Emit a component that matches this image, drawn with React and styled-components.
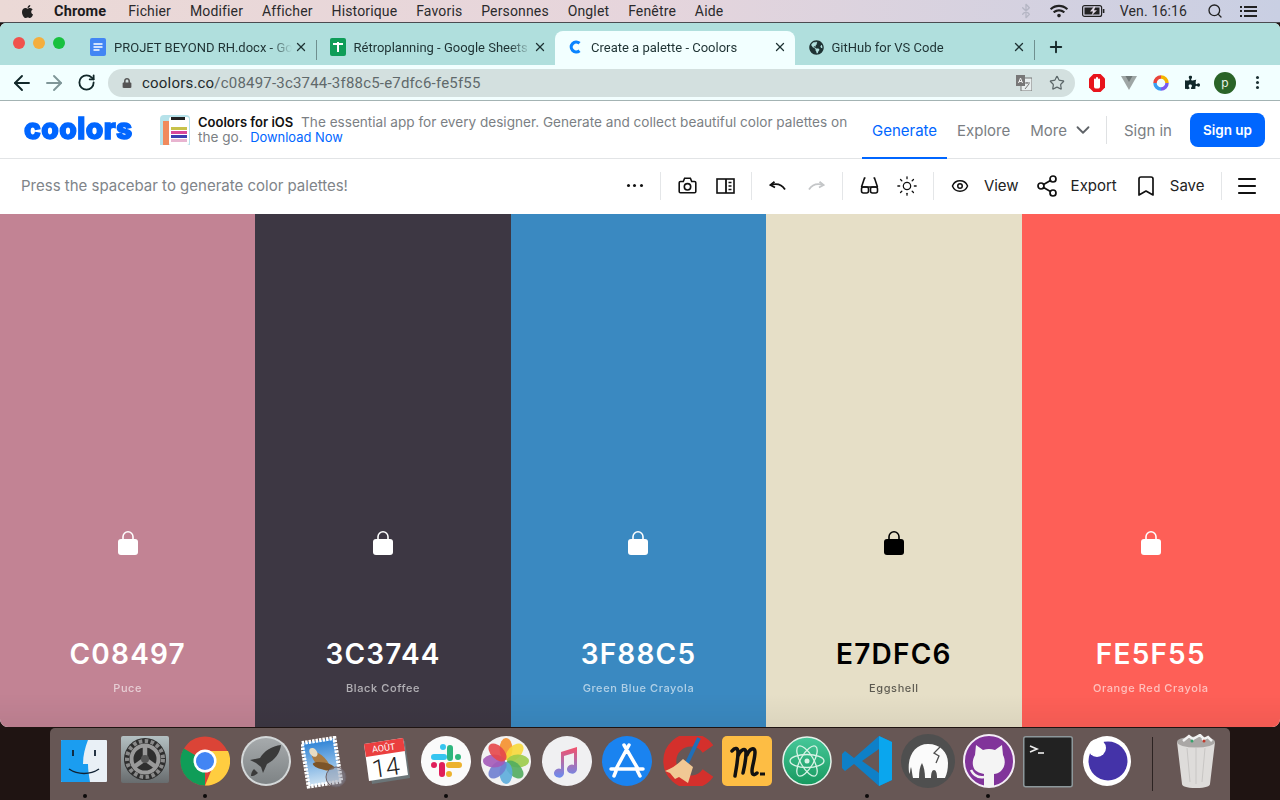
import React from 'react';
import styled, { createGlobalStyle } from 'styled-components';
import {
  ArrowLeft, ArrowRight, RotateCw, Star, X, Plus, Sun, Eye, Share2,
  Bookmark, Menu, ChevronDown, Bluetooth, Search,
} from 'lucide-react';
import { FaApple, FaLock, FaPuzzlePiece, FaGlobeAmericas, FaWifi } from 'react-icons/fa';

const Global = createGlobalStyle`
  html, body { margin: 0; padding: 0; overflow: hidden; }
  body { background: #1f1412; font-family: Inter, "Liberation Sans", sans-serif; }
  * { box-sizing: border-box; }
`;

const Screen = styled.div`
  width: 1280px;
  height: 800px;
  display: flex;
  flex-direction: column;
  background: #1f1412;
`;

const MenuBar = styled.div`
  height: 23px;
  flex: none;
  display: flex;
  align-items: center;
  padding: 0 0 0 20px;
  font-family: Roboto, sans-serif;
  font-size: 14px;
  letter-spacing: 0.15px;
  color: #2b2a2c;
  background: linear-gradient(90deg, #ebd9d6, #e6d5dc 50%, #c9cfe3);
  border-bottom: 1px solid #4a4b50;
`;

const AppleMark = styled(FaApple)`
  margin-right: 19px;
  color: #222;
`;

const MenuLabel = styled.span`
  margin-right: ${p => p.$gap ?? 19}px;
  margin-left: ${p => p.$ml ?? 0}px;
  font-weight: ${p => (p.$bold ? 700 : 400)};
  font-size: ${p => (p.$bold ? 14.5 : 14)}px;
  color: ${p => (p.$bold ? '#1c1b1d' : '#2b2a2c')};
`;

const StatusArea = styled.div`
  margin-left: auto;
  display: flex;
  align-items: center;
  padding-right: 23px;
  svg { flex: none; }
`;

const StatusSlot = styled.span`
  display: flex;
  margin-right: ${p => p.$mr}px;
  color: ${p => p.$c || '#222'};
`;

const ListGlyph = styled.span`
  width: 17px;
  height: 11px;
  display: flex;
  flex-direction: column;
  justify-content: space-between;
  i {
    height: 2px;
    background: linear-gradient(90deg, #222 2px, transparent 2px, transparent 4px, #222 4px);
  }
`;

const Browser = styled.div`
  flex: none;
  height: 704px;
  display: flex;
  flex-direction: column;
  background: #fff;
  border-radius: 6px 6px 8px 8px;
  overflow: hidden;
`;

const TabStrip = styled.div`
  height: 42px;
  flex: none;
  display: flex;
  align-items: flex-end;
  padding-left: 76px;
  background: #b0dfdd;
  position: relative;
`;

const Lights = styled.div`
  position: absolute;
  left: 13px;
  top: 14px;
  display: flex;
  gap: 8px;
`;

const Light = styled.i`
  width: 12px;
  height: 12px;
  border-radius: 50%;
  background: ${p => p.$c};
`;

const Tab = styled.div`
  width: 239.5px;
  height: 34px;
  display: flex;
  align-items: center;
  padding: 0 8px 2px 14px;
  font-family: Roboto, sans-serif;
  font-size: 13px;
  color: #1e3233;
  border-radius: 8px 8px 0 0;
  background: ${p => (p.$active ? '#f2ffff' : 'transparent')};
  position: relative;
  svg { flex: none; }
  &::after {
    content: '';
    display: ${p => (p.$sep ? 'block' : 'none')};
    position: absolute;
    right: -1px;
    top: 9px;
    height: 20px;
    width: 1px;
    background: #6f8f8f;
  }
`;

const TabTitle = styled.span`
  flex: 1;
  min-width: 0;
  margin: 0 2px 0 8px;
  white-space: nowrap;
  overflow: hidden;
  text-overflow: clip;
  -webkit-mask-image: linear-gradient(90deg, #000 88%, transparent 100%);
  mask-image: linear-gradient(90deg, #000 88%, transparent 100%);
`;

const NewTab = styled.div`
  display: flex;
  align-items: center;
  height: 34px;
  padding: 0 0 2px 13px;
  color: #16292a;
`;

const ChromeBar = styled.div`
  height: 36px;
  flex: none;
  display: flex;
  align-items: center;
  padding-left: 9.5px;
  background: #f2ffff;
  border-bottom: 1px solid #a3b3b3;
  color: #1c3133;
`;

const NavButton = styled.div`
  width: 24px;
  display: flex;
  justify-content: center;
  margin-right: ${p => p.$mr ?? 8.5}px;
  color: ${p => p.$c || '#12282a'};
`;

const Omnibox = styled.div`
  width: 967px;
  height: 28px;
  flex: none;
  border-radius: 14px;
  background: #d3e0df;
  display: flex;
  align-items: center;
  padding: 0 10px 0 14px;
  font-size: 15px;
  letter-spacing: 0.2px;
  color: #60696b;
  font-family: Roboto, sans-serif;
`;

const Host = styled.span`
  color: #1f2b2d;
  margin-left: 10px;
`;

const OmniRight = styled.div`
  margin-left: auto;
  display: flex;
  align-items: center;
  gap: 17px;
  color: #5b6668;
`;

const Extensions = styled.div`
  display: flex;
  align-items: center;
  margin-left: 14px;
  gap: 16px;
`;

const Avatar = styled.div`
  width: 22px;
  height: 22px;
  margin-left: -2px;
  border-radius: 50%;
  background: #2a6428;
  color: #e8f3e6;
  font-size: 12px;
  display: flex;
  align-items: center;
  justify-content: center;
`;

const Kebab = styled.div`
  display: flex;
  flex-direction: column;
  gap: 2px;
  margin-left: 4px;
  i { width: 3px; height: 3px; border-radius: 50%; background: #1c3133; }
`;

const SiteHeader = styled.div`
  height: 58px;
  flex: none;
  display: flex;
  align-items: stretch;
  padding: 0 15px 0 24px;
  border-bottom: 1px solid #e2e4e6;
`;

const Logo = styled.div`
  width: 110px;
  flex: none;
  align-self: center;
  font-size: 26px;
  font-weight: 800;
  letter-spacing: 0.4px;
  line-height: 28px;
  color: #0066ff;
  -webkit-text-stroke: 1.3px #0066ff;
  transform: scale(1.09, 1.14);
  transform-origin: left center;
  margin-top: -2px;
`;

const AppThumb = styled.div`
  width: 30px;
  height: 30px;
  margin-left: 26px;
  align-self: center;
  flex: none;
  border-radius: 4px 4px 0 0;
  overflow: hidden;
`;

const Promo = styled.div`
  width: 655px;
  flex: none;
  margin-left: 8px;
  align-self: center;
  font-size: 13.6px;
  line-height: 15px;
  color: #7b7f84;
  b { color: #111; font-size: 13px; font-weight: 600; margin-right: 4px; }
  a { color: #0066ff; font-size: 12.9px; margin-left: 4px; }
`;

const Nav = styled.div`
  margin-left: auto;
  display: flex;
  align-items: stretch;
  font-size: 15px;
  color: #7a7e83;
  white-space: nowrap;
`;

const NavItem = styled.div`
  display: flex;
  align-items: center;
  padding: 0 ${p => p.$px ?? 10}px;
  margin-bottom: -1px;
  color: ${p => (p.$active ? '#0066ff' : 'inherit')};
  border-bottom: 2px solid ${p => (p.$active ? '#0066ff' : 'transparent')};
  border-top: 2px solid transparent;
`;

const NavChevron = styled(ChevronDown)`
  margin-left: 5px;
  color: #5f6368;
`;

const NavDivider = styled.div`
  width: 1px;
  height: 28px;
  align-self: center;
  background: #dfe1e3;
  margin: 0 17px 0 2px;
`;

const SignUp = styled.div`
  align-self: center;
  width: 75px;
  height: 34px;
  margin-left: 18px;
  border-radius: 8px;
  background: #0066ff;
  color: #fff;
  font-weight: 600;
  font-size: 13.5px;
  display: flex;
  align-items: center;
  justify-content: center;
`;

const Toolbar = styled.div`
  height: 55px;
  flex: none;
  display: flex;
  align-items: center;
  padding: 0 23.5px 2px 21px;
  color: #111;
`;

const Hint = styled.div`
  margin-right: auto;
  font-size: 15px;
  color: #808489;
`;

const ToolDivider = styled.div`
  width: 1px;
  height: 28px;
  background: #e4e6e8;
  margin: 0 ${p => p.$r ?? 17}px 0 ${p => p.$l ?? 16}px;
`;

const ToolIcon = styled.div`
  width: 19px;
  display: flex;
  justify-content: center;
  margin-right: ${p => p.$mr || 0}px;
  color: ${p => p.$c || '#111'};
  svg { flex: none; }
`;

const ToolLabel = styled.span`
  font-size: 15px;
  margin: 0 ${p => p.$mr ?? 20}px 0 14px;
  color: #222;
`;

const Dots = styled.div`
  width: 16px;
  display: flex;
  justify-content: space-between;
  i { width: 3px; height: 3px; border-radius: 50%; background: #111; }
`;

const Palette = styled.div`
  flex: 1;
  display: grid;
  grid-template-columns: repeat(4, 255.4px) 1fr;
`;

const Swatch = styled.div`
  display: flex;
  flex-direction: column;
  align-items: center;
  padding-top: 317px;
  color: ${p => (p.$dark ? '#000' : '#fff')};
  background: linear-gradient(180deg, transparent 480px, rgba(0, 0, 0, 0.05) 513px), ${p => p.$bg};
`;

const Hex = styled.div`
  margin-top: 82px;
  font-size: 28px;
  line-height: 34px;
  font-weight: 600;
  letter-spacing: 1.2px;
`;

const ColorName = styled.div`
  margin-top: 10px;
  font-size: 11px;
  line-height: 14px;
  font-weight: 500;
  letter-spacing: 0.6px;
  opacity: 0.6;
`;

const Dock = styled.div`
  flex: 1;
  width: 1180px;
  margin: 1px 0 0 50px;
  display: flex;
  align-items: flex-start;
  padding: 8px 0 0 10px;
  gap: 10.2px;
  background: #675755;
  border-radius: 5px 5px 0 0;
`;

const DockItem = styled.div`
  width: 50px;
  height: 62px;
  position: relative;
  flex: none;
  &::after {
    content: '';
    display: ${p => (p.$running ? 'block' : 'none')};
    position: absolute;
    left: 23px;
    bottom: 0;
    width: 4px;
    height: 4px;
    border-radius: 50%;
    background: #0c0a0a;
  }
  svg { display: block; }
`;

const DockDivider = styled.div`
  width: 1px;
  height: 54px;
  margin: 1px 10px 0 9px;
  flex: none;
  background: #2c2322;
`;

const DocsIcon = () => (
  <svg width="16" height="18" viewBox="0 0 16 18">
    <rect width="16" height="18" rx="2" fill="#4285f4" />
    <path d="M3.5 6h9M3.5 9h9M3.5 12h6" stroke="#fff" strokeWidth="1.5" />
  </svg>
);

const SheetsIcon = () => (
  <svg width="16" height="18" viewBox="0 0 16 18">
    <rect width="16" height="18" rx="2" fill="#0f9d58" />
    <path d="M3 6h10M8 4v10" stroke="#fff" strokeWidth="2" />
  </svg>
);

const CoolorsFavicon = () => (
  <svg width="14" height="14" viewBox="0 0 14 14">
    <path d="M10.5 3.2A5 5 0 1 0 10.5 10.8" fill="none" stroke="#0a84ff" strokeWidth="3.2" />
  </svg>
);

const Battery = () => (
  <svg width="24" height="12" viewBox="0 0 24 12">
    <rect x="0.6" y="0.6" width="19" height="10.8" rx="2" fill="none" stroke="#222" strokeWidth="1.2" />
    <rect x="2.5" y="2.5" width="15" height="7" fill="#222" />
    <path d="M12 1.5L8 6.5h3L9.5 10.5 15 5.2h-3l1.5-3.7z" fill="#e0d8e4" />
    <rect x="20.8" y="4" width="1.6" height="4" fill="#222" />
  </svg>
);

const Translate = () => (
  <svg width="16" height="16" viewBox="0 0 16 16">
    <rect x="5" y="3" width="11" height="13" fill="#e8eeee" stroke="#777" />
    <rect width="9" height="11" fill="#777" />
    <path d="M2.5 8L4.5 3 6.5 8M3 6.5h3" stroke="#eee" fill="none" />
    <path d="M8 8h6M11 7v1.5M9 14l4-5" stroke="#777" fill="none" />
  </svg>
);

const StopExt = () => (
  <svg width="16" height="18" viewBox="0 0 16 18">
    <path d="M4.5 0h7L16 4.5v9L11.5 18h-7L0 13.5v-9z" fill="#e8141c" />
    <path d="M5 13V5.5a1 1 0 0 1 2 0V4a1 1 0 0 1 2 0v1.5a1 1 0 0 1 2 0V13a2 2 0 0 1-2 1.5H7A2 2 0 0 1 5 13z" fill="#fff" />
  </svg>
);

const VueExt = () => (
  <svg width="16" height="14" viewBox="0 0 16 14">
    <path d="M0 0h16L8 14z" fill="#9ea6a5" />
    <path d="M4.5 0h7L8 6z" fill="#6f7776" />
  </svg>
);

const RingExt = () => (
  <svg width="16" height="16" viewBox="0 0 16 16" fill="none" strokeWidth="3.5">
    <path d="M8 2a6 6 0 0 1 6 6" stroke="#f4b400" />
    <path d="M14 8a6 6 0 0 1-6 6" stroke="#7a5cf0" />
    <path d="M8 14a6 6 0 0 1-6-6" stroke="#3aa0f2" />
    <path d="M2 8a6 6 0 0 1 6-6" stroke="#e8453c" />
  </svg>
);

const CameraIcon = () => (
  <svg width="19" height="17" viewBox="0 0 19 17" fill="none" stroke="#111" strokeWidth="1.6">
    <path d="M2.5 4.5h2.8L6.6 1.2h5.8l1.3 3.3h2.8a1.3 1.3 0 0 1 1.3 1.3v8.7a1.3 1.3 0 0 1-1.3 1.3h-14a1.3 1.3 0 0 1-1.3-1.3V5.8a1.3 1.3 0 0 1 1.3-1.3z" />
    <circle cx="9.5" cy="9.8" r="3.2" />
  </svg>
);

const CompareIcon = () => (
  <svg width="19" height="16" viewBox="0 0 19 16" fill="none" stroke="#111" strokeWidth="1.6">
    <rect x="1" y="1" width="17" height="14" />
    <path d="M10 1v14" strokeWidth="1.8" />
    <path d="M12.5 4.5h3M12.5 8h3M12.5 11.5h3" />
  </svg>
);

const UndoIcon = ({ redo }) => (
  <svg width="17" height="10" viewBox="0 0 17 10" fill="none" stroke={redo ? '#c4c6c8' : '#111'} strokeWidth="1.8" style={redo ? { transform: 'scaleX(-1)' } : undefined}>
    <path d="M5.5 0.8L1.5 4l4.5 2.5" />
    <path d="M1.5 4c6-2 11-1 14.5 4.5" />
  </svg>
);

const GlassesIcon = () => (
  <svg width="19" height="17" viewBox="0 0 19 17" fill="none" stroke="#111" strokeWidth="1.6">
    <path d="M5.5 1H4.500L1.500 10M13.500 1h1l3 9" />
    <path d="M1.5 10h16" />
    <rect x="1.5" y="10" width="7" height="6" rx="2" />
    <rect x="10.5" y="10" width="7" height="6" rx="2" />
  </svg>
);

const SwatchLock = ({ dark }) => (
  <svg width="22" height="24" viewBox="0 0 22 24">
    <path d="M6 11V5.8a5 5 0 0 1 10 0V11" fill="none" stroke={dark ? '#000' : '#fff'} strokeWidth="1.6" />
    <rect x="1" y="8" width="20" height="16" rx="3" fill={dark ? '#000' : '#fff'} />
  </svg>
);

const Finder = () => (
  <svg width="50" height="50" viewBox="0 0 50 50">
    <rect x="1" y="4" width="46" height="42" rx="1" fill="#e9f0f6" />
    <path d="M2 4h26c-3 8-5 15-5 24h5c0 6 1 12 2 18H2a1 1 0 0 1-1-1V5a1 1 0 0 1 1-1z" fill="#1b9df0" />
    <path d="M13 14v6M35 14v6" stroke="#123" strokeWidth="1.8" />
    <path d="M9 33c9 6 21 6 30 0" stroke="#123" strokeWidth="1.5" fill="none" />
  </svg>
);

const Settings = () => (
  <svg width="50" height="50" viewBox="0 0 50 50">
    <defs>
      <linearGradient id="set" x1="0" y1="0" x2="0" y2="1">
        <stop offset="0" stopColor="#b4c0c2" />
        <stop offset="1" stopColor="#686c6e" />
      </linearGradient>
    </defs>
    <rect x="1" y="0" width="48" height="47" rx="2" fill="url(#set)" />
    <circle cx="25" cy="23" r="21" fill="#2e2e2e" />
    <circle cx="25" cy="23" r="18" fill="none" stroke="#8a8a8a" strokeWidth="4" strokeDasharray="3.5 2.5" />
    <circle cx="25" cy="23" r="13.5" fill="none" stroke="#9a9a9a" strokeWidth="4" />
    <path d="M25 23V10M25 23L14 31M25 23l11 8" stroke="#9a9a9a" strokeWidth="4.5" />
    <circle cx="25" cy="23" r="4" fill="#555" />
  </svg>
);

const Chrome = () => (
  <svg width="50" height="50" viewBox="0 0 50 50">
    <circle cx="25" cy="25" r="24.5" fill="#db4437" />
    <path d="M25 25L3.8 12.5A24.5 24.5 0 0 0 25 49.5z" fill="#0f9d58" />
    <path d="M25 15h23A24.5 24.5 0 0 1 25 49.5L34 28z" fill="#ffcd40" />
    <circle cx="25" cy="25" r="11.5" fill="#fff" />
    <circle cx="25" cy="25" r="9" fill="#4285f4" />
  </svg>
);

const Rocket = () => (
  <svg width="50" height="50" viewBox="0 0 50 50">
    <defs>
      <linearGradient id="rkt" x1="0" y1="0" x2="0" y2="1">
        <stop offset="0" stopColor="#a6aaac" />
        <stop offset="1" stopColor="#7e8385" />
      </linearGradient>
    </defs>
    <circle cx="25" cy="25" r="25" fill="#d4d8d9" />
    <circle cx="25" cy="25" r="23" fill="url(#rkt)" />
    <path d="M40 9c-9 1-17 6-21 13l-10 2 6 3 5 4 2 6 4-9c8-4 13-11 14-19z" fill="#3a3a3a" />
    <path d="M13 33c-2 2-3 4-3 7 3 0 5-1 7-3z" fill="#3a3a3a" />
  </svg>
);

const Mail = () => (
  <svg width="50" height="56" viewBox="0 0 50 56">
    <defs>
      <linearGradient id="sky" x1="0" y1="0" x2="0" y2="1">
        <stop offset="0" stopColor="#2e83d6" />
        <stop offset="1" stopColor="#cfe3f2" />
      </linearGradient>
    </defs>
    <g transform="rotate(-9 22 26)">
      <rect x="4" y="4" width="33" height="44" fill="url(#sky)" stroke="#fff" strokeWidth="4" strokeDasharray="2.5 1" />
      <ellipse cx="20" cy="25" rx="5" ry="12" fill="#a87a42" transform="rotate(-35 20 25)" />
      <ellipse cx="22" cy="30" rx="11" ry="3.5" fill="#7c5428" transform="rotate(20 22 30)" />
      <ellipse cx="14" cy="15" rx="3.5" ry="5" fill="#e8dcc2" transform="rotate(-30 14 15)" />
    </g>
    <circle cx="35" cy="41" r="10" fill="#8a8fa0" fillOpacity="0.45" stroke="#6d6166" />
  </svg>
);

const Calendar = () => (
  <svg width="50" height="50" viewBox="0 0 50 50">
    <path d="M6 10l38-5 5 37-38 6z" fill="#6b7578" />
    <path d="M3 8L42 2l5 37-39 6z" fill="#fff" />
    <path d="M3 8L42 2l2 13L5 21z" fill="#ea3f3f" />
    <text x="23" y="15" fontSize="9" fill="#fff" textAnchor="middle" fontFamily="Roboto" transform="rotate(-8 23 15)">AOÛT</text>
    <text x="26" y="40" fontSize="25" fill="#222" textAnchor="middle" fontFamily="Roboto" fontWeight="300" transform="rotate(-8 26 40)">14</text>
  </svg>
);

const Slack = () => (
  <svg width="50" height="50" viewBox="0 0 50 50">
    <circle cx="25" cy="25" r="25" fill="#fafafa" />
    <g fill="none" strokeWidth="6" strokeLinecap="round">
      <path d="M13 21h10M22 11v0" stroke="#36c5f0" />
      <path d="M29 12v10M37 21v0" stroke="#2eb67d" />
      <path d="M28 29h10M28 38v0" stroke="#ecb22e" />
      <path d="M21 29v9M13 29v0" stroke="#e01e5a" />
    </g>
  </svg>
);

const petalColors = ['#f5902c', '#f7d83a', '#9ccb4a', '#52ac5e', '#5cacdc', '#6f7ed0', '#a45ab8', '#e5474a'];

const Photos = () => (
  <svg width="50" height="50" viewBox="0 0 50 50">
    <circle cx="25" cy="25" r="25" fill="#f2f2f2" />
    {petalColors.map((c, i) => (
      <ellipse key={c} cx="25" cy="13" rx="6.5" ry="11" fill={c} fillOpacity="0.9" transform={`rotate(${i * 45} 25 25)`} />
    ))}
  </svg>
);

const Music = () => (
  <svg width="50" height="50" viewBox="0 0 50 50">
    <defs>
      <linearGradient id="mus" x1="0" y1="0" x2="0" y2="1">
        <stop offset="0" stopColor="#f4506a" />
        <stop offset="1" stopColor="#6a8cf0" />
      </linearGradient>
    </defs>
    <circle cx="25" cy="25" r="25" fill="#f0f0f2" />
    <path d="M19 16l16-5v22a5 4.5 0 1 1-3-4V17l-10 3v17a5 4.5 0 1 1-3-4z" fill="url(#mus)" />
  </svg>
);

const AppStore = () => (
  <svg width="50" height="50" viewBox="0 0 50 50">
    <circle cx="25" cy="25" r="25" fill="#1a83f0" />
    <path d="M27 9L14 33M22 9l14 24M9 33h32M12 40l2-5M38 40l-3-6" stroke="#fff" strokeWidth="3.5" strokeLinecap="round" fill="none" />
  </svg>
);

const Cleaner = () => (
  <svg width="56" height="50" viewBox="0 0 56 50">
    <path d="M46 13A21 21 0 1 0 46 37" fill="none" stroke="#d4302c" strokeWidth="13" />
    <path d="M37 2L25 27" stroke="#1f6fb8" strokeWidth="4" />
    <path d="M21 23l10 8-5 16-9-6-4 2-5-6-5-2c8-3 13-7 18-12z" fill="#f0c894" />
  </svg>
);

const Mweb = () => (
  <svg width="50" height="50" viewBox="0 0 50 50">
    <rect width="50" height="50" rx="5" fill="#fdbd44" />
    <path d="M10 15c3-4 6-3 6 1 0 9-2 17-3 24M16 20c3-7 8-9 8-3 0 8-2 15-3 20M25 19c3-7 8-8 8-3 0 7-3 14-3 19 0 5 3 4 5 2" stroke="#111" strokeWidth="3.5" fill="none" strokeLinecap="round" />
    <path d="M38 38h5" stroke="#111" strokeWidth="3" />
  </svg>
);

const Atom = () => (
  <svg width="50" height="50" viewBox="0 0 50 50">
    <defs>
      <linearGradient id="atm" x1="0" y1="0" x2="0" y2="1">
        <stop offset="0" stopColor="#47c89a" />
        <stop offset="1" stopColor="#17995f" />
      </linearGradient>
    </defs>
    <circle cx="25" cy="25" r="24" fill="url(#atm)" stroke="#e4f1ea" strokeWidth="1.5" />
    <g fill="none" stroke="#d8f3e6" strokeWidth="1.3">
      <ellipse cx="25" cy="25" rx="6.5" ry="17" transform="rotate(30 25 25)" />
      <ellipse cx="25" cy="25" rx="6.5" ry="17" transform="rotate(-30 25 25)" />
      <ellipse cx="25" cy="25" rx="6.5" ry="17" transform="rotate(90 25 25)" />
    </g>
    <circle cx="25" cy="25" r="2.5" fill="#d8f3e6" />
  </svg>
);

const VSCode = () => (
  <svg width="50" height="50" viewBox="0 0 50 50">
    <path d="M37 0l13 6v38l-13 6-25-22L3 35l-3-3v-14l3-3 9 7z" fill="#0e80c8" />
    <path d="M37 0l13 6v38l-13 6z" fill="#0aa6ee" />
    <path d="M37 13v24L20 25z" fill="#675755" />
  </svg>
);

const Mamp = () => (
  <svg width="54" height="54" viewBox="0 0 54 54" style={{ marginTop: -2, marginLeft: -2 }}>
    <circle cx="27" cy="27" r="27" fill="#4f4f4f" />
    <path d="M8 38C6 22 14 10 27 10c12 0 20 8 20 19 0 6-1 11-3 15h-8c0-5-1-8-3-8s-3 3-3 8h-6c0-6-1-11-3-15-2 3-3 8-3 15h-6c-1-4-1-8-2-11-1 3-1 5-1 7z" fill="#fbfbfb" />
    <path d="M39 13l-6 6 5 3-3 7" stroke="#4f4f4f" strokeWidth="1.3" fill="none" />
  </svg>
);

const GitHub = () => (
  <svg width="52" height="54" viewBox="0 0 52 54" style={{ marginTop: -2 }}>
    <ellipse cx="26" cy="27" rx="25" ry="26" fill="#81349a" stroke="#f4edf6" strokeWidth="2" />
    <path d="M13 11l7 5a20 20 0 0 1 12 0l7-5 1 10c3 6 2 12-2 16-2 2-5 3-7 3v13H21V40c-4-1-7-2-9-4-3-4-3-10 0-15z" fill="#f4f4f4" />
    <path d="M8 36c3 6 7 8 13 7" stroke="#f4f4f4" strokeWidth="2.5" fill="none" />
  </svg>
);

const Terminal = () => (
  <svg width="50" height="52" viewBox="0 0 50 52">
    <rect x="0.75" y="0.75" width="48.5" height="50" rx="2" fill="#222" stroke="#8d989b" strokeWidth="1.5" />
    <path d="M7 10l7 3-7 3" stroke="#eee" strokeWidth="1.6" fill="none" />
    <path d="M15 17h6" stroke="#eee" strokeWidth="1.6" />
  </svg>
);

const Eclipse = () => (
  <svg width="50" height="50" viewBox="0 0 50 50">
    <ellipse cx="24" cy="25" rx="24" ry="25" fill="#fff" />
    <circle cx="25" cy="25" r="19.5" fill="#4433a8" />
    <circle cx="14" cy="12" r="9" fill="#fff" />
  </svg>
);

const Trash = () => (
  <svg width="44" height="54" viewBox="0 0 44 54" style={{ marginTop: -2 }}>
    <path d="M3 8h38l-5 42c0 2-4 4-14 4s-14-2-14-4z" fill="#dedcda" />
    <path d="M13 14l3 34M22 14v36M31 14l-3 34" stroke="#c8c6c4" />
    <ellipse cx="22" cy="8" rx="19" ry="5.5" fill="#aaa7a5" />
    <path d="M9 7l6-5 5 4M19 5l7-4 4 4M28 6l6-3 4 4" stroke="#f2f2f2" strokeWidth="2.5" fill="none" />
    <circle cx="18" cy="7" r="1.5" fill="#37a06a" />
    <circle cx="30" cy="7" r="1.5" fill="#c0392b" />
  </svg>
);

const menuItems = ['Fichier', 'Modifier', 'Afficher', 'Historique', 'Favoris', 'Personnes', 'Onglet', 'Fenêtre', 'Aide'];

const tabs = [
  { title: 'PROJET BEYOND RH.docx - Google Docs', icon: <DocsIcon />, sep: true },
  { title: 'Rétroplanning - Google Sheets', icon: <SheetsIcon /> },
  { title: 'Create a palette - Coolors', icon: <CoolorsFavicon />, active: true },
  { title: 'GitHub for VS Code', icon: <FaGlobeAmericas size={15} />, sep: true },
];

const colors = [
  { hex: 'C08497', name: 'Puce', bg: '#c28394' },
  { hex: '3C3744', name: 'Black Coffee', bg: '#3d3743' },
  { hex: '3F88C5', name: 'Green Blue Crayola', bg: '#3a89c1' },
  { hex: 'E7DFC6', name: 'Eggshell', bg: '#e6dfc7', dark: true },
  { hex: 'FE5F55', name: 'Orange Red Crayola', bg: '#fe5f57' },
];

const dockApps = [
  { id: 'finder', el: <Finder />, running: true },
  { id: 'settings', el: <Settings /> },
  { id: 'chrome', el: <Chrome />, running: true },
  { id: 'launchpad', el: <Rocket /> },
  { id: 'mail', el: <Mail /> },
  { id: 'calendar', el: <Calendar /> },
  { id: 'slack', el: <Slack />, running: true },
  { id: 'photos', el: <Photos /> },
  { id: 'music', el: <Music /> },
  { id: 'appstore', el: <AppStore /> },
  { id: 'ccleaner', el: <Cleaner /> },
  { id: 'mweb', el: <Mweb /> },
  { id: 'atom', el: <Atom /> },
  { id: 'vscode', el: <VSCode />, running: true },
  { id: 'mamp', el: <Mamp /> },
  { id: 'github', el: <GitHub />, running: true },
  { id: 'terminal', el: <Terminal /> },
  { id: 'eclipse', el: <Eclipse /> },
];

export default function App() {
  return (
    <Screen>
      <Global />
      <MenuBar>
        <AppleMark size={15} />
        <MenuLabel $bold $gap={22}>Chrome</MenuLabel>
        {menuItems.map(m => <MenuLabel key={m} $gap={18.9}>{m}</MenuLabel>)}
        <StatusArea>
          <StatusSlot $mr={16} $c="#b5b6c4"><Bluetooth size={16} /></StatusSlot>
          <StatusSlot $mr={14}><FaWifi size={18} /></StatusSlot>
          <Battery />
          <MenuLabel $gap={20} $ml={14}>Ven. 16:16</MenuLabel>
          <StatusSlot $mr={17}><Search size={16} /></StatusSlot>
          <ListGlyph><i /><i /><i /></ListGlyph>
        </StatusArea>
      </MenuBar>

      <Browser>
        <TabStrip>
          <Lights>
            <Light $c="#f0524d" />
            <Light $c="#f4ae3d" />
            <Light $c="#18c13f" />
          </Lights>
          {tabs.map(t => (
            <Tab key={t.title} $active={t.active} $sep={t.sep}>
              {t.icon}
              <TabTitle>{t.title}</TabTitle>
              <X size={14} strokeWidth={2.2} />
            </Tab>
          ))}
          <NewTab><Plus size={18} strokeWidth={2.5} /></NewTab>
        </TabStrip>

        <ChromeBar>
          <NavButton><ArrowLeft size={24} strokeWidth={1.9} /></NavButton>
          <NavButton $c="#7f9698"><ArrowRight size={24} strokeWidth={1.9} /></NavButton>
          <NavButton $mr={9.5}><RotateCw size={19} strokeWidth={2.3} /></NavButton>
          <Omnibox>
            <FaLock size={10} color="#555" />
            <Host>coolors.co</Host>/c08497-3c3744-3f88c5-e7dfc6-fe5f55
            <OmniRight>
              <Translate />
              <Star size={16} strokeWidth={1.8} />
            </OmniRight>
          </Omnibox>
          <Extensions>
            <StopExt />
            <VueExt />
            <RingExt />
            <FaPuzzlePiece size={15} color="#10282a" />
            <Avatar>p</Avatar>
            <Kebab><i /><i /><i /></Kebab>
          </Extensions>
        </ChromeBar>

        <SiteHeader>
          <Logo>coolors</Logo>
          <AppThumb>
            <svg width="30" height="30" viewBox="0 0 30 30">
              <rect width="30" height="30" fill="#b6e2ea" />
              <rect x="3" y="6" width="6" height="24" fill="#f08a5d" />
              <rect x="9" y="2" width="20" height="28" rx="2" fill="#fff" />
              <rect x="11" y="2" width="14" height="3" fill="#222" />
              <rect x="11" y="12" width="16" height="3" fill="#c8c24a" />
              <rect x="11" y="16" width="16" height="3" fill="#d8489a" />
              <rect x="11" y="20" width="16" height="3" fill="#3a3fb0" />
              <rect x="11" y="24" width="16" height="3" fill="#e8b4d0" />
            </svg>
          </AppThumb>
          <Promo>
            <b>Coolors for iOS</b> The essential app for every designer. Generate and collect beautiful color palettes on the go.
            <a> Download Now</a>
          </Promo>
          <Nav>
            <NavItem $active>Generate</NavItem>
            <NavItem>Explore</NavItem>
            <NavItem>More<NavChevron size={22} strokeWidth={2} /></NavItem>
            <NavDivider />
            <NavItem $px={0}>Sign in</NavItem>
            <SignUp>Sign up</SignUp>
          </Nav>
        </SiteHeader>

        <Toolbar>
          <Hint>Press the spacebar to generate color palettes!</Hint>
          <Dots><i /><i /><i /></Dots>
          <ToolDivider $l={17} $r={17} />
          <ToolIcon $mr={19}><CameraIcon /></ToolIcon>
          <ToolIcon><CompareIcon /></ToolIcon>
          <ToolDivider $r={16} />
          <ToolIcon $mr={20}><UndoIcon /></ToolIcon>
          <ToolIcon><UndoIcon redo /></ToolIcon>
          <ToolDivider />
          <ToolIcon $mr={19}><GlassesIcon /></ToolIcon>
          <ToolIcon><Sun size={22} strokeWidth={1.4} /></ToolIcon>
          <ToolDivider />
          <ToolIcon><Eye size={18} strokeWidth={2} /></ToolIcon>
          <ToolLabel $mr={19}>View</ToolLabel>
          <ToolIcon><Share2 size={24} strokeWidth={1.7} /></ToolIcon>
          <ToolLabel>Export</ToolLabel>
          <ToolIcon><Bookmark size={24} strokeWidth={1.7} /></ToolIcon>
          <ToolLabel $mr={0}>Save</ToolLabel>
          <ToolDivider $l={16} $r={16} />
          <ToolIcon><Menu size={24} strokeWidth={2.2} /></ToolIcon>
        </Toolbar>

        <Palette>
          {colors.map(c => (
            <Swatch key={c.hex} $bg={c.bg} $dark={c.dark}>
              <SwatchLock dark={c.dark} />
              <Hex>{c.hex}</Hex>
              <ColorName>{c.name}</ColorName>
            </Swatch>
          ))}
        </Palette>
      </Browser>

      <Dock>
        {dockApps.map(a => (
          <DockItem key={a.id} $running={a.running}>{a.el}</DockItem>
        ))}
        <DockDivider />
        <DockItem><Trash /></DockItem>
      </Dock>
    </Screen>
  );
}
